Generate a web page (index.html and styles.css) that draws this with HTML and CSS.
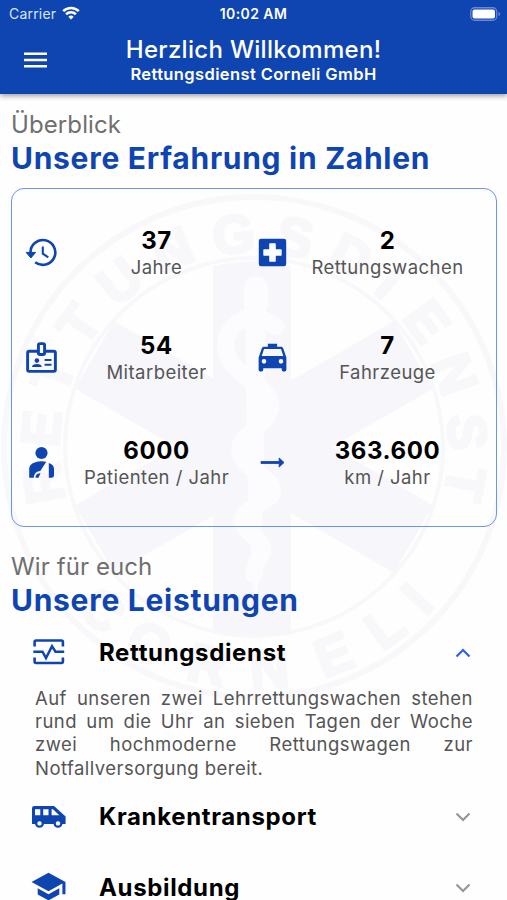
FILE: index.html
```html
<!DOCTYPE html>
<html lang="de">
<head>
<meta charset="utf-8">
<title>Rettungsdienst Corneli GmbH</title>
<link rel="stylesheet" href="styles.css">
</head>
<body>
<div class="screen">
  <header class="topbar">
    <div class="statusbar">
      <div class="carrier"><span>Carrier</span>
        <svg class="wifi" viewBox="0 0 18 14"><path d="M9 13.5 6.3 10.7a3.9 3.9 0 0 1 5.4 0Z" fill="#fff"/><path d="M4.1 8.3a7 7 0 0 1 9.8 0M1.2 5.1a11.2 11.2 0 0 1 15.6 0" fill="none" stroke="#fff" stroke-width="2.6"/></svg>
      </div>
      <div class="clock">10:02 AM</div>
      <svg class="battery" viewBox="0 0 31 14"><rect x=".75" y=".75" width="26" height="12.5" rx="4" fill="none" stroke="#6d87d2" stroke-width="1.3"/><rect x="2.5" y="2.5" width="22.5" height="9" rx="2" fill="#fff"/><path d="M28.5 5v4q1.7-.5 1.7-2t-1.7-2" fill="#6d87d2"/></svg>
    </div>
    <div class="appbar">
      <svg class="menu" viewBox="0 0 23 16"><path d="M0 1.7h23M0 8h23M0 14.3h23" stroke="#fff" stroke-width="2.5"/></svg>
      <div class="titles">
        <h1>Herzlich Willkommen!</h1>
        <p>Rettungsdienst Corneli GmbH</p>
      </div>
      <span></span>
    </div>
  </header>

  <main>
    <svg class="emblem" viewBox="-254 -254 508 508" aria-hidden="true">
      <circle r="250" class="ring" stroke-width="6"/>
      <circle r="189" class="ring" stroke-width="4"/>
      <g class="fill">
        <path d="M-41-181Q0-190 37-181V185Q0 190-41 185Z"/>
        <path d="M-39-184H39V184H-39Z" transform="rotate(60)"/>
        <path d="M-39-184H39V184H-39Z" transform="rotate(-60)"/>
      </g>
      <g class="snake">
        <path d="M-10-160Q-8-171 2-171T14-158V-138H-10Z"/>
        <path d="M-9-145H12L9 60 4 140Q1 160-1 140L-6 60Z"/>
        <path d="M22-120C12-128-2-134-14-126C-34-112-34-90-10-72C6-60 24-50 14-32C6-18-18-10-14 6C-12 22 24 32 18 46C14 58-14 60-12 76C-8 88 14 94 8 106C4 114 0 118 0 128" class="coil"/>
      </g>
      <g class="letters">
        <text transform="rotate(-100) translate(0 -195)">R</text><text transform="rotate(-85) translate(0 -195)">E</text><text transform="rotate(-70) translate(0 -195)">T</text><text transform="rotate(-55) translate(0 -195)">T</text><text transform="rotate(-39) translate(0 -195)">U</text><text transform="rotate(-22.5) translate(0 -195)">N</text><text transform="rotate(-5.5) translate(0 -195)">G</text><text transform="rotate(11) translate(0 -195)">S</text><text transform="rotate(27) translate(0 -195)">D</text><text transform="rotate(39.5) translate(0 -195)">I</text><text transform="rotate(54) translate(0 -195)">E</text><text transform="rotate(70) translate(0 -195)">N</text><text transform="rotate(86) translate(0 -195)">S</text><text transform="rotate(100) translate(0 -195)">T</text>
        <text transform="rotate(43) translate(0 241)">C</text><text transform="rotate(28) translate(0 241)">O</text><text transform="rotate(12) translate(0 241)">R</text><text transform="rotate(-4) translate(0 241)">N</text><text transform="rotate(-21) translate(0 241)">E</text><text transform="rotate(-36) translate(0 241)">L</text><text transform="rotate(-47) translate(0 241)">I</text>
      </g>
    </svg>

    <section class="overview">
      <p class="kicker">Überblick</p>
      <h2>Unsere Erfahrung in Zahlen</h2>
      <div class="stats">
        <div class="stat">
          <svg class="icon" viewBox="0 0 37 37"><path d="M7.5 19A12.4 12.4 0 1 1 12.2 28.2" fill="none" stroke="currentColor" stroke-width="2.6"/><path d="M3.2 18.4H12.6L7.9 24Z" stroke="currentColor" stroke-linejoin="round"/><path d="M19.8 12.5v7.2l5.5 3.6" fill="none" stroke="currentColor" stroke-width="2.1"/></svg>
          <div class="figure"><strong>37</strong><span>Jahre</span></div>
        </div>
        <div class="stat">
          <svg class="icon" viewBox="0 0 37 37"><path fill-rule="evenodd" d="M7 4.8H30Q32.2 4.8 32.2 7V30Q32.2 32.2 30 32.2H7Q4.8 32.2 4.8 30V7Q4.8 4.8 7 4.8M16 9.3Q15.2 9.3 15.2 10.1V15.2H10.1Q9.3 15.2 9.3 16V21Q9.3 21.8 10.1 21.8H15.2V26.9Q15.2 27.7 16 27.7H21Q21.8 27.7 21.8 26.9V21.8H26.9Q27.7 21.8 27.7 21V16Q27.7 15.2 26.9 15.2H21.8V10.1Q21.8 9.3 21 9.3Z"/></svg>
          <div class="figure"><strong>2</strong><span>Rettungswachen</span></div>
        </div>
        <div class="stat">
          <svg class="icon" viewBox="0 0 24 24"><g fill="none" stroke="currentColor" stroke-width="1.9"><path d="M9.5 8H4Q3 8 3 9V20Q3 21 4 21H20Q21 21 21 20V9Q21 8 20 8H14.5"/><rect x="10" y="3" width="4" height="7" rx="1"/></g><circle cx="9" cy="14" r="1.5"/><path d="M5.8 18.2Q6 16.2 9 16.2T12.2 18.2ZM14 13h4.5v1.3H14zM14 16h4.5v1.3H14z"/></svg>
          <div class="figure"><strong>54</strong><span>Mitarbeiter</span></div>
        </div>
        <div class="stat">
          <svg class="icon" viewBox="0 0 24 24"><path d="M5,11L6.5,6.5H17.5L19,11M17.5,16A1.5,1.5 0 0,1 16,14.5A1.5,1.5 0 0,1 17.5,13A1.5,1.5 0 0,1 19,14.5A1.5,1.5 0 0,1 17.5,16M6.5,16A1.5,1.5 0 0,1 5,14.5A1.5,1.5 0 0,1 6.5,13A1.5,1.5 0 0,1 8,14.5A1.5,1.5 0 0,1 6.5,16M18.92,6C18.72,5.42 18.16,5 17.5,5H15V3H9V5H6.5C5.84,5 5.28,5.42 5.08,6L3,12V20A1,1 0 0,0 4,21H5A1,1 0 0,0 6,20V19H18V20A1,1 0 0,0 19,21H20A1,1 0 0,0 21,20V12L18.92,6Z"/></svg>
          <div class="figure"><strong>7</strong><span>Fahrzeuge</span></div>
        </div>
        <div class="stat">
          <svg class="icon" viewBox="0 0 37 37"><circle cx="18.5" cy="9" r="6.1"/><path d="M6.2 33.8V25Q6.2 20.5 11 18.8Q17 16.5 23.3 17.8L17.3 27Q11.5 27 10.7 33.8ZM12.6 33.8Q12.3 29.3 17.5 29.3L15.5 33.8ZM25.8 19Q31 20.5 31 25V31.5Q31 33.8 28.5 33.8H25.8Z"/></svg>
          <div class="figure"><strong>6000</strong><span>Patienten / Jahr</span></div>
        </div>
        <div class="stat">
          <svg class="icon" viewBox="0 0 37 37"><path d="M7 17.6H25.2V14L30 18.5 25.2 23V19.4H7Z" stroke="currentColor" stroke-width=".9" stroke-linejoin="round"/></svg>
          <div class="figure"><strong>363.600</strong><span>km / Jahr</span></div>
        </div>
      </div>
    </section>

    <section class="services">
      <p class="kicker">Wir für euch</p>
      <h2>Unsere Leistungen</h2>
      <div class="service first">
        <svg class="icon" viewBox="0 0 37 37"><g fill="none" stroke="currentColor" stroke-width="2.6"><path d="M4.6 13.5V9Q4.6 7.5 6.1 7.5H31.4Q32.9 7.5 32.9 9V13.5M4.6 24.5V28.5Q4.6 30 6.1 30H31.4Q32.9 30 32.9 28.5V24.5"/><path d="M3.3 18.7H12.5L16 25 22 13.2 25.5 18.7H34.2" stroke-width="2.5"/></g></svg>
        <h3>Rettungsdienst</h3>
        <svg class="chevron open" viewBox="0 0 16 10"><path d="M1.5 8.5 8 2l6.5 6.5"/></svg>
      </div>
      <p class="detail">Auf unseren zwei Lehrrettungswachen stehen rund um die Uhr an sieben Tagen der Woche zwei hochmoderne Rettungswagen zur Notfallversorgung bereit.</p>
      <div class="service">
        <svg class="icon" viewBox="0 0 37 37"><path fill-rule="evenodd" d="M4.3 8H24L35.6 18.5V26H32.5A4.6 4.6 0 0 1 23.5 26H14A4.6 4.6 0 0 1 5 26H2V10.3Q2 8 4.3 8M5 11.2V17.3H10.3V11.2ZM13.2 11.2V17.3H18.5V11.2ZM21.6 11.2V17.3H29.3L23 11.2ZM9.5 23.2A2.2 2.2 0 1 0 9.5 27.6A2.2 2.2 0 1 0 9.5 23.2M28 23.2A2.2 2.2 0 1 0 28 27.6A2.2 2.2 0 1 0 28 23.2"/></svg>
        <h3>Krankentransport</h3>
        <svg class="chevron" viewBox="0 0 16 10"><path d="m1.5 1.5 6.5 6.5 6.5-6.5"/></svg>
      </div>
      <div class="service last">
        <svg class="icon" viewBox="0 0 24 24"><path d="M12,3L1,9L12,15L21,10.09V17H23V9M5,13.18V17.18L12,21L19,17.18V13.18L12,17L5,13.18Z"/></svg>
        <h3>Ausbildung</h3>
        <svg class="chevron" viewBox="0 0 16 10"><path d="m1.5 1.5 6.5 6.5 6.5-6.5"/></svg>
      </div>
    </section>
  </main>
</div>
</body>
</html>
```
FILE: styles.css
```css
* { box-sizing: border-box; }

body {
  margin: 0;
  background: #fefefe;
  font-family: Inter, "Liberation Sans", sans-serif;
  color: #000;
}

h1, h2, h3, p { margin: 0; }

.screen { height: 900px; overflow: hidden; }

.topbar {
  position: relative;
  z-index: 1;
  height: 94px;
  background: #0f45b1;
  color: #fff;
  box-shadow: 0 2px 5px rgba(0, 0, 0, .38);
}

.statusbar {
  display: grid;
  grid-template-columns: 1fr auto 1fr;
  align-items: center;
  height: 27px;
  padding: 0 6px;
  font-size: 14px;
  line-height: 27px;
}

.carrier { display: flex; align-items: center; gap: 6px; padding-left: 3px; letter-spacing: .2px; color: #dbe4f8; }
.wifi { width: 18px; height: 14px; margin-top: -1px; }
.clock { font-weight: 600; letter-spacing: .4px; }
.battery { width: 31px; height: 14px; justify-self: end; }

.appbar {
  display: grid;
  grid-template-columns: 70px 1fr 70px;
  align-items: start;
  text-align: center;
}

.menu { width: 23px; height: 16px; margin: 25px 0 0 24px; }

.titles h1 { margin-top: 8px; font-size: 24px; line-height: 30px; font-weight: 500; letter-spacing: .3px; white-space: nowrap; }
.titles p { font-size: 16.5px; line-height: 19px; font-weight: 600; letter-spacing: .38px; }

main { position: relative; padding: 14px 10px 0 11px; }

.emblem {
  position: absolute;
  left: 0;
  top: 99px;
  width: 508px;
  height: 508px;
  z-index: -1;
}

.ring { fill: none; stroke: #f8f8fb; }
.fill { fill: #f6f6fb; }
.snake { fill: #fcfcfe; }
.coil { fill: none; stroke: #fcfcfe; stroke-width: 17; stroke-linecap: round; }
.letters {
  fill: #f8f8fb;
  stroke: #f8f8fb;
  stroke-width: 3;
  font: bold 54px "Liberation Sans", sans-serif;
  text-anchor: middle;
}

.kicker { font-size: 24px; line-height: 34px; color: #6f6f6f; letter-spacing: .1px; }
h2 { font-size: 30px; line-height: 32px; font-weight: 700; color: #0f45b1; letter-spacing: .72px; }

.stats {
  display: grid;
  grid-template-columns: 231px 231px;
  grid-auto-rows: 105px;
  margin-top: 14px;
  height: 339px;
  padding: 11px 10.5px;
  border: 1.5px solid #6b93f0;
  border-radius: 13px;
}

.stat { display: grid; grid-template-columns: 37px 1fr; align-items: center; }
.icon { width: 37px; height: 37px; fill: currentColor; color: #0f45b1; }
.figure { display: flex; flex-direction: column; align-items: center; padding-top: 3px; }
.figure strong { font-size: 24px; line-height: 26px; font-weight: 700; letter-spacing: .6px; }
.figure span { font-size: 18.5px; line-height: 26px; color: #555; letter-spacing: .45px; }

.services { padding-top: 23px; }

.service {
  display: grid;
  grid-template-columns: 69.5px 1fr 16px;
  align-items: center;
  height: 71px;
  padding: 0 26px 0 18.5px;
}
.service.first { height: 71px; }
.service.last { height: 70px; }
h3 { padding-top: 2px; font-size: 24px; line-height: 30px; font-weight: 700; letter-spacing: .65px; }

.chevron { width: 16px; height: 10px; margin-top: 2px; fill: none; stroke: #969696; stroke-width: 2.2; }
.chevron.open { stroke: #2c63ed; }

.detail {
  padding: 0 24px;
  margin-bottom: 1px;
  font-size: 18.5px;
  line-height: 23.2px;
  color: #555;
  text-align: justify;
  letter-spacing: .45px;
}
```
